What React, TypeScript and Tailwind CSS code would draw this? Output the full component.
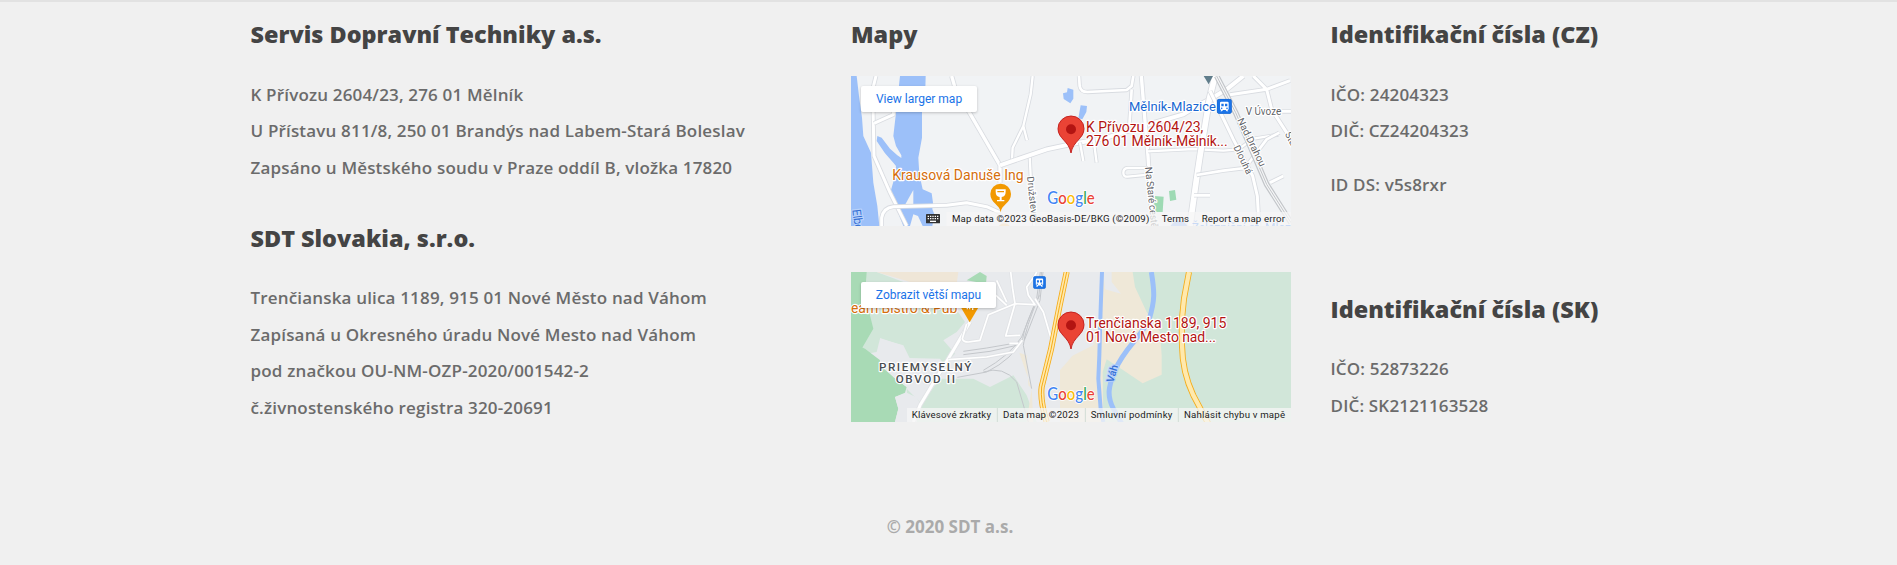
import type { ReactNode } from "react";

const roboto = "font-['Roboto','Liberation_Sans',sans-serif]";

function Heading({ children }: { children: ReactNode }) {
  return <h3 className="text-[23.4px] leading-9 font-extrabold text-[#444444] whitespace-nowrap">{children}</h3>;
}

function Lines({ items, className = "" }: { items: string[]; className?: string }) {
  return (
    <div className={`text-[17px] leading-[36.6px] font-semibold tracking-[0.17px] whitespace-nowrap text-[#6b6b6b] ${className}`}>
      {items.map((item) => (
        <p key={item}>{item}</p>
      ))}
    </div>
  );
}

function Road({ d, w = 12, c = "#ffffff", edge = "#d9dce1" }: { d: string; w?: number; c?: string; edge?: string }) {
  return (
    <g fill="none" strokeLinejoin="round">
      <path d={d} stroke={edge} strokeWidth={w + 5} />
      <path d={d} stroke={c} strokeWidth={w} />
    </g>
  );
}

function Pin() {
  return (
    <g>
      <path d="M693 261 C688 226 654 218 654 188 A39 38 0 0 1 732 188 C732 218 698 226 693 261Z" fill="#ea4335" stroke="#c5221f" strokeWidth="3" />
      <circle cx="693" cy="190" r="15" fill="#b31412" />
    </g>
  );
}

function Train({ x, y, size }: { x: number; y: number; size: number }) {
  return (
    <svg x={x} y={y} width={size} height={size} viewBox="0 0 46 46">
      <rect x="1" y="1" width="44" height="44" rx="8" fill="#1a73e8" stroke="#1765cc" strokeWidth="2" />
      <path d="M14 9h18q4 0 4 4v17q0 4-4 4l3 4h-5l-3-4h-8l-3 4h-5l3-4q-4 0-4-4V13q0-4 4-4Z" fill="#fff" />
      <path d="M14 15h7v8h-7zM25 15h7v8h-7z" fill="#1a73e8" />
      <circle cx="15" cy="29" r="2.5" fill="#1a73e8" />
      <circle cx="31" cy="29" r="2.5" fill="#1a73e8" />
    </svg>
  );
}

function GoogleWord() {
  return (
    <text x="622" y="415" fontSize="49" fontWeight="500" stroke="#fff" strokeWidth="5" paintOrder="stroke" textLength="142" lengthAdjust="spacingAndGlyphs" className="font-['Lato',sans-serif]">
      <tspan fill="#4285f4">G</tspan>
      <tspan fill="#ea4335">o</tspan>
      <tspan fill="#fbbc04">o</tspan>
      <tspan fill="#4285f4">g</tspan>
      <tspan fill="#34a853">l</tspan>
      <tspan fill="#ea4335">e</tspan>
    </text>
  );
}

type LabelProps = { x: number; y: number; size: number; fill: string; len: number; rotate?: number; halo?: string; weight?: number; children: string };

function Label({ x, y, size, fill, len, rotate = 0, halo = "#ffffff", weight = 400, children }: LabelProps) {
  return (
    <text
      transform={`translate(${x} ${y}) rotate(${rotate})`}
      fontSize={size}
      fontWeight={weight}
      fill={fill}
      textLength={len}
      stroke={halo}
      strokeWidth="7"
      strokeLinejoin="round"
      paintOrder="stroke"
      className={roboto}
    >
      {children}
    </text>
  );
}

function MapButton({ label, className }: { label: string; className: string }) {
  return (
    <button className={`absolute left-[10px] top-[10px] h-[26px] rounded-[2px] bg-white text-center text-[12px] whitespace-nowrap text-[#1a73e8] shadow-[0_1px_3px_rgba(0,0,0,0.22)] ${roboto} ${className}`}>
      {label}
    </button>
  );
}

function CzechMap() {
  return (
    <div className="relative h-[150px] w-[440px] overflow-hidden">
      <svg viewBox="33 30 1320 450" className="block h-full w-full">
        <rect x="33" y="30" width="1320" height="450" fill="#f1f3f5" />
        <g fill="#9cc0f9">
          <path d="M33 30H50L57 90 66 155 70 210 93 260 100 350 112 420 118 480H33Z" />
          <path d="M180 30H257L256 70 246 130V215L235 275 238 325 248 370 275 382 279 410 277 430 283 445 277 480H248L234 450 220 445 210 480H190L158 400 153 372 165 330 168 300 160 290 135 262 110 225 112 210 125 215 150 248 172 268 184 276 184 268 168 240 160 210 168 140Z" />
          <path d="M683 66l17 5v27l-9 14-20-13-2-17 12-3ZM722 118l19 2-2 18-12 22-12-3Z" />
        </g>
        <path d="M220 372V418L196 415Z" fill="#f1f3f5" />
        <path d="M944 390l27 2-3 46h-27ZM987 375l18-3 4 29-19 4Z" fill="#9edab4" />
        <Road d="M108 30L98 70 102 270 150 380 200 480" w={9} />
        <Road d="M102 172L160 146V120" w={9} />
        <Road d="M125 480V455Q130 425 160 422L320 418 380 410 440 422 480 440" w={9} />
        <Road d="M335 30L345 65 480 298V350" w={10} />
        <Road d="M578 30L572 85 550 180 518 245 516 280M550 180L561 223" w={7} />
        <Road d="M569 270L572 330 583 480" w={7} />
        <Road d="M480 298L620 250 700 233 800 215 910 180 1030 145 1070 120 1110 100 1160 70 1210 30" w={12} />
        <Road d="M717 30L719 60Q722 78 742 78L860 72 875 60 880 30M875 70L868 180" w={8} />
        <Road d="M904 30L912 130 924 270 932 400 938 480" w={10} />
        <Road d="M924 256L1060 249 1150 254 1195 250 1240 218 1315 206M720 230L730 285M760 215L770 290" w={7} />
        <Road d="M924 306H863Q850 307 850 320 850 333 863 332L924 326" w={7} />
        <Road d="M1125 30L1108 100 1080 270 1068 350 1050 480" w={17} />
        <Road d="M1070 327L1150 314 1215 306 1280 220 1318 200M1062 388H1110" w={8} />
        <Road d="M1110 75L1180 220 1238 330 1252 390 1257 480M1170 86L1280 70 1350 44M1240 30L1280 70 1295 130 1353 220M1300 136H1353M1290 350L1330 330" w={9} />
        <g fill="none">
          <path d="M1130 30L1187 140 1280 355 1353 470" stroke="#c2c5c9" strokeWidth="17" />
          <path d="M1130 30L1187 140 1280 355 1353 470" stroke="#f4f5f6" strokeWidth="10" />
          <path d="M1130 30L1187 140 1280 355 1353 470" stroke="#c2c5c9" strokeWidth="3" />
        </g>
        <path d="M1091 30h28l-13 25Z" fill="#607d8b" />
        <path d="M482 439C479 415 451 411 451 384A31 31 0 0 1 513 384C513 411 485 415 482 439Z" fill="#f29900" />
        <path d="M467 370h30v7q0 14-12 16v9h8v4h-22v-4h8v-9q-12-2-12-16ZM472 375v4h20v-4Z" fill="#fff" />
        <circle cx="493" cy="492" r="20" fill="#f6c98c" />
        <circle cx="1017" cy="492" r="28" fill="#8fb4f5" />
        <Label x={157} y={343} size={42} fill="#d56e0c" len={394}>Krausová Danuše Ing</Label>
        <Label x={867} y={135} size={39} fill="#1967d2" len={261}>Mělník-Mlazice</Label>
        <Train x={1130} y={98} size={46} />
        <Label x={1217} y={146} size={30} fill="#5f6368" len={107}>V Úvoze</Label>
        <Label x={1191} y={162} size={30} fill="#5f6368" len={158} rotate={64}>Nad Drahou</Label>
        <Label x={1180} y={244} size={29} fill="#5f6368" len={92} rotate={64}>Dlouhá</Label>
        <Label x={1334} y={204} size={29} fill="#5f6368" len={66} rotate={62}>Stará</Label>
        <Label x={915} y={304} size={30} fill="#5f6368" len={184} rotate={84}>Na Staré cestě</Label>
        <Label x={561} y={332} size={29} fill="#5f6368" len={136} rotate={84}>Družstevní</Label>
        <Label x={37} y={431} size={36} fill="#3570d4" len={64} rotate={83} halo="#b8d2fb">Elbe</Label>
        <text x="1055" y="497" fontSize="36" fill="#4285f4" className={roboto}>Železniční st. Mlaz</text>
        <Label x={738} y={198} size={42} fill="#b31412" len={352}>K Přívozu 2604/23,</Label>
        <Label x={738} y={240} size={42} fill="#b31412" len={425}>276 01 Mělník-Mělník...</Label>
        <Pin />
        <GoogleWord />
        <rect x="319" y="438" width="1034" height="42" fill="#f5f5f5" opacity=".75" />
        <g>
          <rect x="258" y="444" width="42" height="28" rx="2" fill="#333" />
          <path d="M263 451h32M263 458h32" stroke="#fff" strokeWidth="4" strokeDasharray="4 3" />
          <path d="M270 466h18" stroke="#fff" strokeWidth="4" />
        </g>
        <g className={roboto} fontSize="29" fill="#1c1c1c">
          <text x="336" y="468" textLength="592">Map data ©2023 GeoBasis-DE/BKG (©2009)</text>
          <text x="965" y="468" textLength="82">Terms</text>
          <text x="1085" y="468" textLength="250">Report a map error</text>
        </g>
      </svg>
      <MapButton label="View larger map" className="w-[116px]" />
    </div>
  );
}

function SlovakMap() {
  const highway = { c: "#ffe9ad", edge: "#f5ac18" };
  return (
    <div className="relative h-[150px] w-[440px] overflow-hidden">
      <svg viewBox="33 30 1320 450" className="block h-full w-full">
        <rect x="33" y="30" width="1320" height="450" fill="#e8eaed" />
        <path d="M33 30H110L190 60 340 130 375 180 350 210 310 235 345 275 320 300 250 310 210 290 190 250 120 230 110 270 80 275 33 255Z" fill="#d1e6d9" />
        <path d="M33 240L75 260 140 310 160 345 200 375 195 392 165 405 175 440 165 480H33Z" fill="#a8dab5" />
        <path d="M33 30H80L75 100 100 200 65 260 100 300 33 300Z" fill="#a8dab5" />
        <path d="M120 228L185 250 205 288 300 290 330 330 290 380 200 375 160 345 120 310Z" fill="#e8eaed" />
        <path d="M200 380L245 425 300 350 400 350 450 375 520 340 560 400 590 480H225L205 450Z" fill="#d1e6d9" />
        <path d="M165 405L200 392 228 405 245 430 230 480H165L175 440Z" fill="#e8eaed" />
        <path d="M110 30H355L350 65 250 72Z" fill="#efe6d7" />
        <path d="M380 55L420 30 440 42 438 65Z" fill="#a8dab5" />
        <path d="M538 272L560 280 565 370 575 380 580 480H660V300L760 250 790 60 880 30H900L1000 480H560L575 380Z" fill="#efe8d8" />
        <path d="M640 30H790V85L775 180 690 290 655 330 620 310Z" fill="#e8eaed" />
        <path d="M790 30H1000V480H780Z" fill="#efe8d8" />
        <path d="M815 60L843 95 795 82 790 30H815Z" fill="#e8eaed" />
        <path d="M878 30H1353V480H790L788 330 800 292 850 325 908 364 965 338V280L960 210 920 150 885 75Z" fill="#d1e6d9" />
        <path d="M786 30L782 140 778 280 775 350 782 440 790 480" fill="none" stroke="#9cc0f9" strokeWidth="12" />
        <path d="M934 30C944 90 945 115 928 170 905 225 855 255 825 325 805 375 800 400 820 440L848 490" fill="none" stroke="#9cc0f9" strokeWidth="15" />
        <g fill="none" stroke="#c4c7cb" strokeWidth="3">
          <path d="M605 30L596 105Q555 185 548 230 520 290 440 330L352 346M598 100Q555 200 550 250L575 380M370 268L440 258 545 240M370 278L450 268 530 250M430 330Q490 310 530 360L565 480" />
          <path d="M601 30L590 110 545 225Q510 280 430 325M609 30L600 115 553 235" />
        </g>
        <Road d="M390 180L325 290 285 355 240 430 220 480" w={9} edge="#e1e3e6" />
        <Road d="M380 185L367 230Q370 240 385 240L420 235 445 158 525 125 585 128 565 100 560 75 585 40 590 30M512 30L518 80 525 125 497 222 540 220M470 55L500 120M585 110L610 150 632 225M508 244H535M325 293L440 285 520 270 547 235M430 65L500 130" w={5} edge="#e1e3e6" />
        <Road d="M680 30L659 130 633 262 605 375Q600 415 620 480" w={13} {...highway} />
        <path d="M680 30L659 130 633 262 605 375Q600 415 620 480" fill="none" stroke="#f5ac18" strokeWidth="3" />
        <Road d="M1047 30L1032 110 1025 180 1026 250Q1027 330 1060 400L1105 485" w={13} {...highway} />
        <Label x={33} y={153} size={42} fill="#d56e0c" len={319}>eam Bistro &amp; Pub</Label>
        <path d="M389 181L362 135H416Z" fill="#f29900" />
        <path d="M382 133v9M389 133v9M398 133v11" stroke="#fff" strokeWidth="4" />
        <Train x={579} y={42} size={39} />
        <Label x={117} y={328} size={35} fill="#4a4e52" len={277} weight={500}>PRIEMYSELNÝ</Label>
        <Label x={167} y={364} size={35} fill="#4a4e52" len={178} weight={500}>OBVOD II</Label>
        <Label x={820} y={363} size={31} fill="#3570d4" len={53} rotate={-74} halo="#b8d2fb" weight={500}>Váh</Label>
        <Label x={738} y={198} size={42} fill="#b31412" len={421}>Trenčianska 1189, 915</Label>
        <Label x={738} y={240} size={42} fill="#b31412" len={390}>01 Nové Mesto nad...</Label>
        <Pin />
        <GoogleWord />
        <rect x="201" y="438" width="1152" height="42" fill="#f5f5f5" opacity=".75" />
        <path d="M472 438V480M736 438V480M1015 438V480" stroke="#d2ddd5" strokeWidth="3" />
        <g className={roboto} fontSize="29" fill="#1c1c1c">
          <text x="215" y="468" textLength="238">Klávesové zkratky</text>
          <text x="489" y="468" textLength="228">Data map ©2023</text>
          <text x="752" y="468" textLength="245">Smluvní podmínky</text>
          <text x="1032" y="468" textLength="303">Nahlásit chybu v mapě</text>
        </g>
      </svg>
      <MapButton label="Zobrazit větší mapu" className="w-[135px]" />
    </div>
  );
}

export default function App() {
  return (
    <footer className="flex h-[565px] w-full flex-col overflow-hidden border-t-2 border-[#e2e2e2] bg-[#f0f0f0] pt-[14px] font-['Open_Sans','Noto_Sans',sans-serif]">
      <div className="flex h-[484px] pl-[250.5px]">
        <section className="w-[600.5px]">
          <Heading>Servis Dopravní Techniky a.s.</Heading>
          <Lines
            className="mt-[24.7px]"
            items={[
              "K Přívozu 2604/23, 276 01 Mělník",
              "U Přístavu 811/8, 250 01 Brandýs nad Labem-Stará Boleslav",
              "Zapsáno u Městského soudu v Praze oddíl B, vložka 17820",
            ]}
          />
          <div className="mt-[33.5px]">
            <Heading>SDT Slovakia, s.r.o.</Heading>
            <Lines
              className="mt-[24px]"
              items={[
                "Trenčianska ulica 1189, 915 01 Nové Město nad Váhom",
                "Zapísaná u Okresného úradu Nové Mesto nad Váhom",
                "pod značkou OU-NM-OZP-2020/001542-2",
                "č.živnostenského registra 320-20691",
              ]}
            />
          </div>
        </section>
        <section className="w-[479.5px]">
          <Heading>Mapy</Heading>
          <div className="mt-6 flex flex-col gap-[46px]">
            <CzechMap />
            <SlovakMap />
          </div>
        </section>
        <section>
          <Heading>Identifikační čísla (CZ)</Heading>
          <Lines className="mt-[24.7px]" items={["IČO: 24204323", "DIČ: CZ24204323"]} />
          <Lines className="mt-[17px]" items={["ID DS: v5s8rxr"]} />
          <div className="mt-[87.5px]">
            <Heading>Identifikační čísla (SK)</Heading>
            <Lines className="mt-[24px]" items={["IČO: 52873226", "DIČ: SK2121163528"]} />
          </div>
        </section>
      </div>
      <p className="pl-[3px] pt-2 text-center text-[17px] leading-[37px] font-bold text-[#aaaaaa]">© 2020 SDT a.s.</p>
    </footer>
  );
}
